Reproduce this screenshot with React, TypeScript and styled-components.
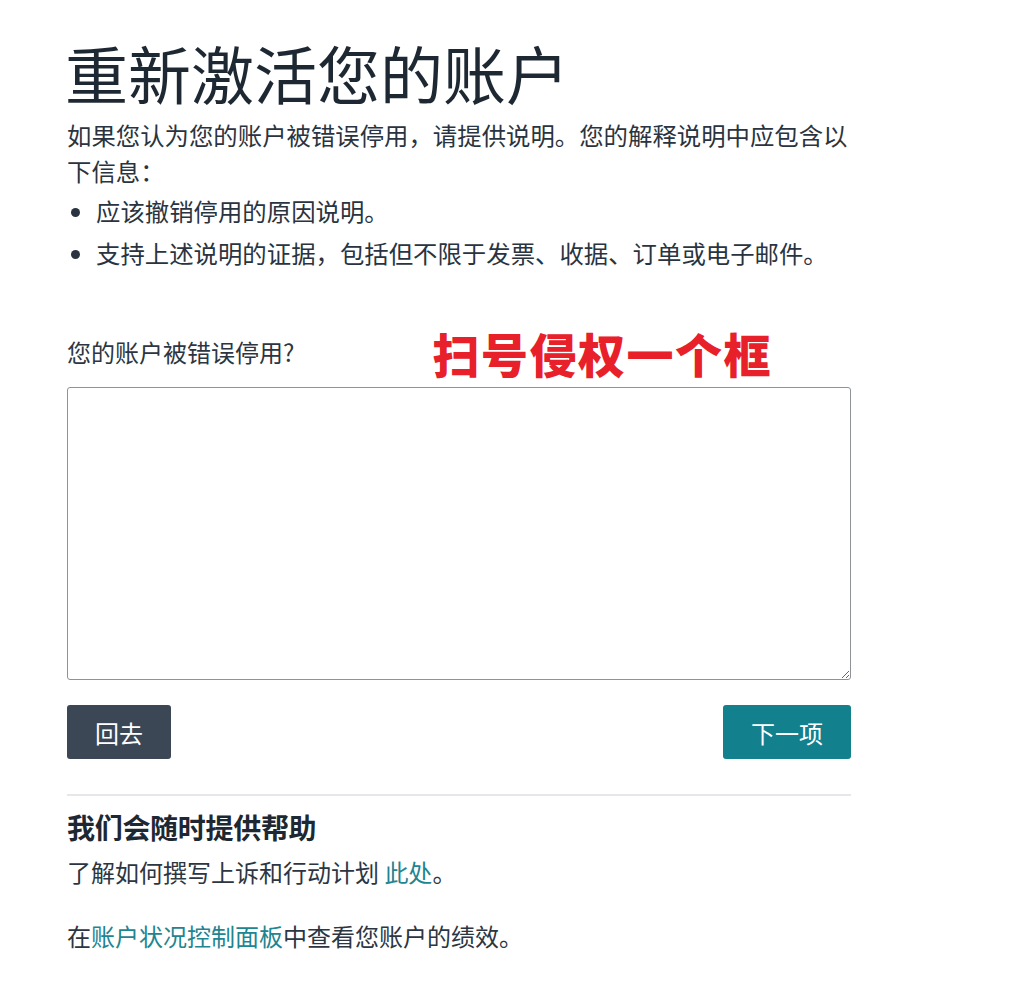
import React from "react"
import styled, { createGlobalStyle } from "styled-components"

const GlobalStyle = createGlobalStyle`
  html, body {
    margin: 0;
    padding: 0;
    background: #ffffff;
  }
  body {
    font-family: "Noto Sans CJK SC", "Noto Sans", sans-serif;
    color: #2a3440;
  }
`

const App = () => {
  return (
    <>
      <GlobalStyle />
      <PageStyled>
        <h1 className="page-title">重新激活您的账户</h1>
        <p className="intro">
          如果您认为您的账户被错误停用，请提供说明。您的解释说明中应包含以下信息：
        </p>
        <ul className="info-list">
          <li>应该撤销停用的原因说明。</li>
          <li>支持上述说明的证据，包括但不限于发票、收据、订单或电子邮件。</li>
        </ul>

        <LabelRow>
          <label htmlFor="appeal">您的账户被错误停用?</label>
          <span className="stamp">扫号侵权一个框</span>
        </LabelRow>
        <TextBox id="appeal" />

        <ButtonRow>
          <Button variant="back">回去</Button>
          <Button variant="next">下一项</Button>
        </ButtonRow>

        <HelpSection>
          <h2>我们会随时提供帮助</h2>
          <p>
            了解如何撰写上诉和行动计划 <a href="#">此处</a>。
          </p>
          <p className="spaced">
            在<a href="#">账户状况控制面板</a>中查看您账户的绩效。
          </p>
        </HelpSection>
      </PageStyled>
    </>
  )
}

const PageStyled = styled.main`
  display: flex;
  flex-direction: column;
  width: 784px;
  padding: 29px 0 40px 67px;

  h1.page-title {
    font-size: 63px;
    line-height: 86px;
    font-weight: 400;
    color: #1e2833;
    margin: 0 0 0 -2px;
  }

  p.intro {
    font-size: 24.4px;
    line-height: 36px;
    margin: 2px 0 0;
  }

  ul.info-list {
    margin: 4px 0 0;
    padding-left: 29px;
    font-size: 24.4px;
    line-height: 36px;

    li + li {
      margin-top: 6px;
    }
  }
`

const LabelRow = styled.div`
  display: flex;
  flex-direction: row;
  align-items: center;
  margin-top: 50px;
  height: 60px;

  label {
    font-size: 24px;
    color: #2c3642;
  }

  .stamp {
    margin-left: 138px;
    font-size: 47px;
    font-weight: 900;
    color: #e8202a;
    letter-spacing: 1.5px;
    position: relative;
    top: 1px;
  }
`

const TextBox = styled.textarea`
  box-sizing: border-box;
  margin-top: 6px;
  width: 784px;
  height: 293px;
  border: 1px solid #8f9296;
  border-radius: 3px;
  resize: vertical;
  font-family: inherit;
  font-size: 20px;
  display: block;
`

const ButtonRow = styled.div`
  display: flex;
  flex-direction: row;
  justify-content: space-between;
  margin-top: 25px;
  padding-bottom: 35px;
  border-bottom: 2px solid #e5e7ea;
`

const Button = styled.button<{ variant: "back" | "next" }>`
  height: 54px;
  padding: 0 28px;
  border: none;
  border-radius: 3px;
  font-family: inherit;
  font-size: 24px;
  color: #ffffff;
  background: ${(p) => (p.variant === "back" ? "#3c4755" : "#13808e")};
  cursor: pointer;
`

const HelpSection = styled.section`
  display: flex;
  flex-direction: column;
  padding-top: 11px;

  h2 {
    font-size: 28px;
    line-height: 40px;
    font-weight: 700;
    color: #1e2833;
    margin: 0;
    letter-spacing: -0.3px;
  }

  p {
    font-size: 24px;
    line-height: 36px;
    margin: 7px 0 0;
    color: #2c3642;

    &.spaced {
      margin-top: 28px;
    }
  }

  a {
    color: #1e8591;
    text-decoration: none;
  }
`

export default App
